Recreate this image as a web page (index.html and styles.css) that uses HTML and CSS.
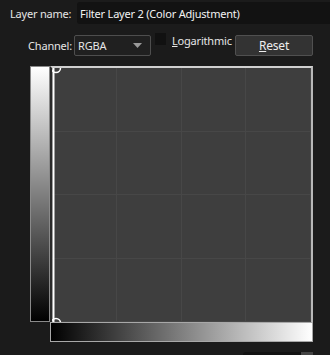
FILE: index.html
```html
<!DOCTYPE html>
<html>
<head>
<meta charset="utf-8">
<link rel="stylesheet" href="styles.css">
</head>
<body>
<div class="row name-row">
  <span class="label">Layer name:</span>
  <div class="name-input">Filter Layer 2 (Color Adjustment)</div>
</div>
<div class="row ctrl-row">
  <span class="label chan-label">Channel:</span>
  <div class="select"><span>RGBA</span><svg class="arrow" width="9" height="5" viewBox="0 0 9 5"><path d="M0 0H9L4.5 5Z" fill="#9a9a9a"/></svg></div>
  <div class="check"></div>
  <span class="label log"><u>L</u>ogarithmic</span>
  <div class="button"><u>R</u>eset</div>
</div>
<div class="curves">
  <div class="vbar"></div>
  <div class="graph">
    <div class="grid">
      <div></div><div></div><div></div><div></div>
      <div></div><div></div><div></div><div></div>
      <div></div><div></div><div></div><div></div>
      <div></div><div></div><div></div><div></div>
    </div>
    <svg class="curve" width="261" height="255" viewBox="0 0 261 255">
      <line x1="1.5" y1="0" x2="1.5" y2="255" stroke="#ffffff" stroke-width="2"/>
      <circle cx="4" cy="0" r="4.5" fill="none" stroke="#ffffff" stroke-width="1.5"/>
      <circle cx="4" cy="255" r="4.5" fill="none" stroke="#ffffff" stroke-width="1.5"/>
    </svg>
  </div>
  <div class="corner"></div>
  <div class="hbar"></div>
</div>
<div class="row bottom-row">
  <div class="bits"><span class="b1"></span><span class="b2"></span></div>
  <div class="spin"><span class="spin-btn"></span></div>
</div>
</body>
</html>
```

FILE: styles.css
```css
html, body {
  margin: 0;
  padding: 0;
  background: #1b1b1b;
  overflow: hidden;
}
body {
  width: 330px;
  height: 355px;
  font-family: "Noto Sans", "Open Sans", sans-serif;
  font-size: 11px;
  letter-spacing: -0.2px;
  color: #e6e6e6;
}
.label {
  white-space: nowrap;
}
.row {
  display: flex;
  align-items: center;
}
.name-row {
  height: 24px;
  padding-top: 1px;
}
.name-row .label {
  flex: none;
  padding-left: 10px;
  box-sizing: border-box;
  width: 77px;
}
.name-input {
  flex: 1;
  height: 22px;
  background: #121212;
  border-radius: 3px 0 0 3px;
  display: flex;
  align-items: center;
  padding-left: 3px;
  color: #f2f2f2;
  white-space: nowrap;
}
.ctrl-row {
  height: 24px;
  margin-top: 8px;
}
.chan-label {
  width: 72px;
  text-align: right;
  padding-right: 2px;
}
.select {
  width: 77px;
  height: 21px;
  box-sizing: border-box;
  border: 1px solid #4e4e4e;
  border-radius: 2px;
  background: #202020;
  display: flex;
  align-items: center;
  justify-content: space-between;
  padding: 0 8px 0 3px;
}
.check {
  width: 11px;
  height: 12px;
  background: #111;
  margin-left: 4px;
  align-self: flex-start;
}
.log {
  margin-left: 6px;
  align-self: flex-start;
}
.button {
  margin-left: auto;
  margin-right: 17px;
  width: 78px;
  height: 21px;
  box-sizing: border-box;
  border: 1px solid #505050;
  border-radius: 2px;
  background: #333333;
  display: flex;
  align-items: center;
  justify-content: center;
  color: #eeeeee;
  font-size: 12px;
}
.curves {
  margin-top: 9px;
  margin-left: 30px;
  display: grid;
  grid-template-columns: 20px 263px;
  grid-template-rows: 256px 20px;
}
.vbar {
  box-sizing: border-box;
  border: 1px solid #8a8a8a;
  background: linear-gradient(to bottom, #ffffff, #000000);
}
.graph {
  position: relative;
  box-sizing: border-box;
  background: #3e3e3e;
  border-top: 2px solid #d0d0d0;
  border-right: 2px solid #b8b8b8;
  border-left: 2px solid #2a2a2a;
  overflow: hidden;
}
.grid {
  display: grid;
  grid-template-columns: repeat(4, 1fr);
  grid-template-rows: repeat(4, 1fr);
  width: 100%;
  height: 100%;
}
.grid div {
  border-right: 1px solid #474747;
  border-bottom: 1px solid #474747;
}
.curve {
  position: absolute;
  left: 0;
  top: 0;
}
.hbar {
  box-sizing: border-box;
  border: 1px solid #a8a8a8;
  background: linear-gradient(to right, #000000, #ffffff);
}
.bottom-row {
  margin-top: 10px;
  height: 10px;
  justify-content: space-between;
  align-items: flex-start;
}
.bits {
  margin-left: 62px;
  display: flex;
  gap: 20px;
}
.bits span {
  width: 3px;
  height: 2px;
  margin-top: 4px;
}
.b1 { background: #d98a3a; }
.b2 { background: #4a8ad9; }
.spin {
  width: 70px;
  height: 10px;
  margin-right: 17px;
  background: #121212;
  border-radius: 3px 3px 0 0;
  position: relative;
}
.spin-btn {
  position: absolute;
  right: 0;
  top: 0;
  width: 12px;
  height: 10px;
  background: #444;
}
```
